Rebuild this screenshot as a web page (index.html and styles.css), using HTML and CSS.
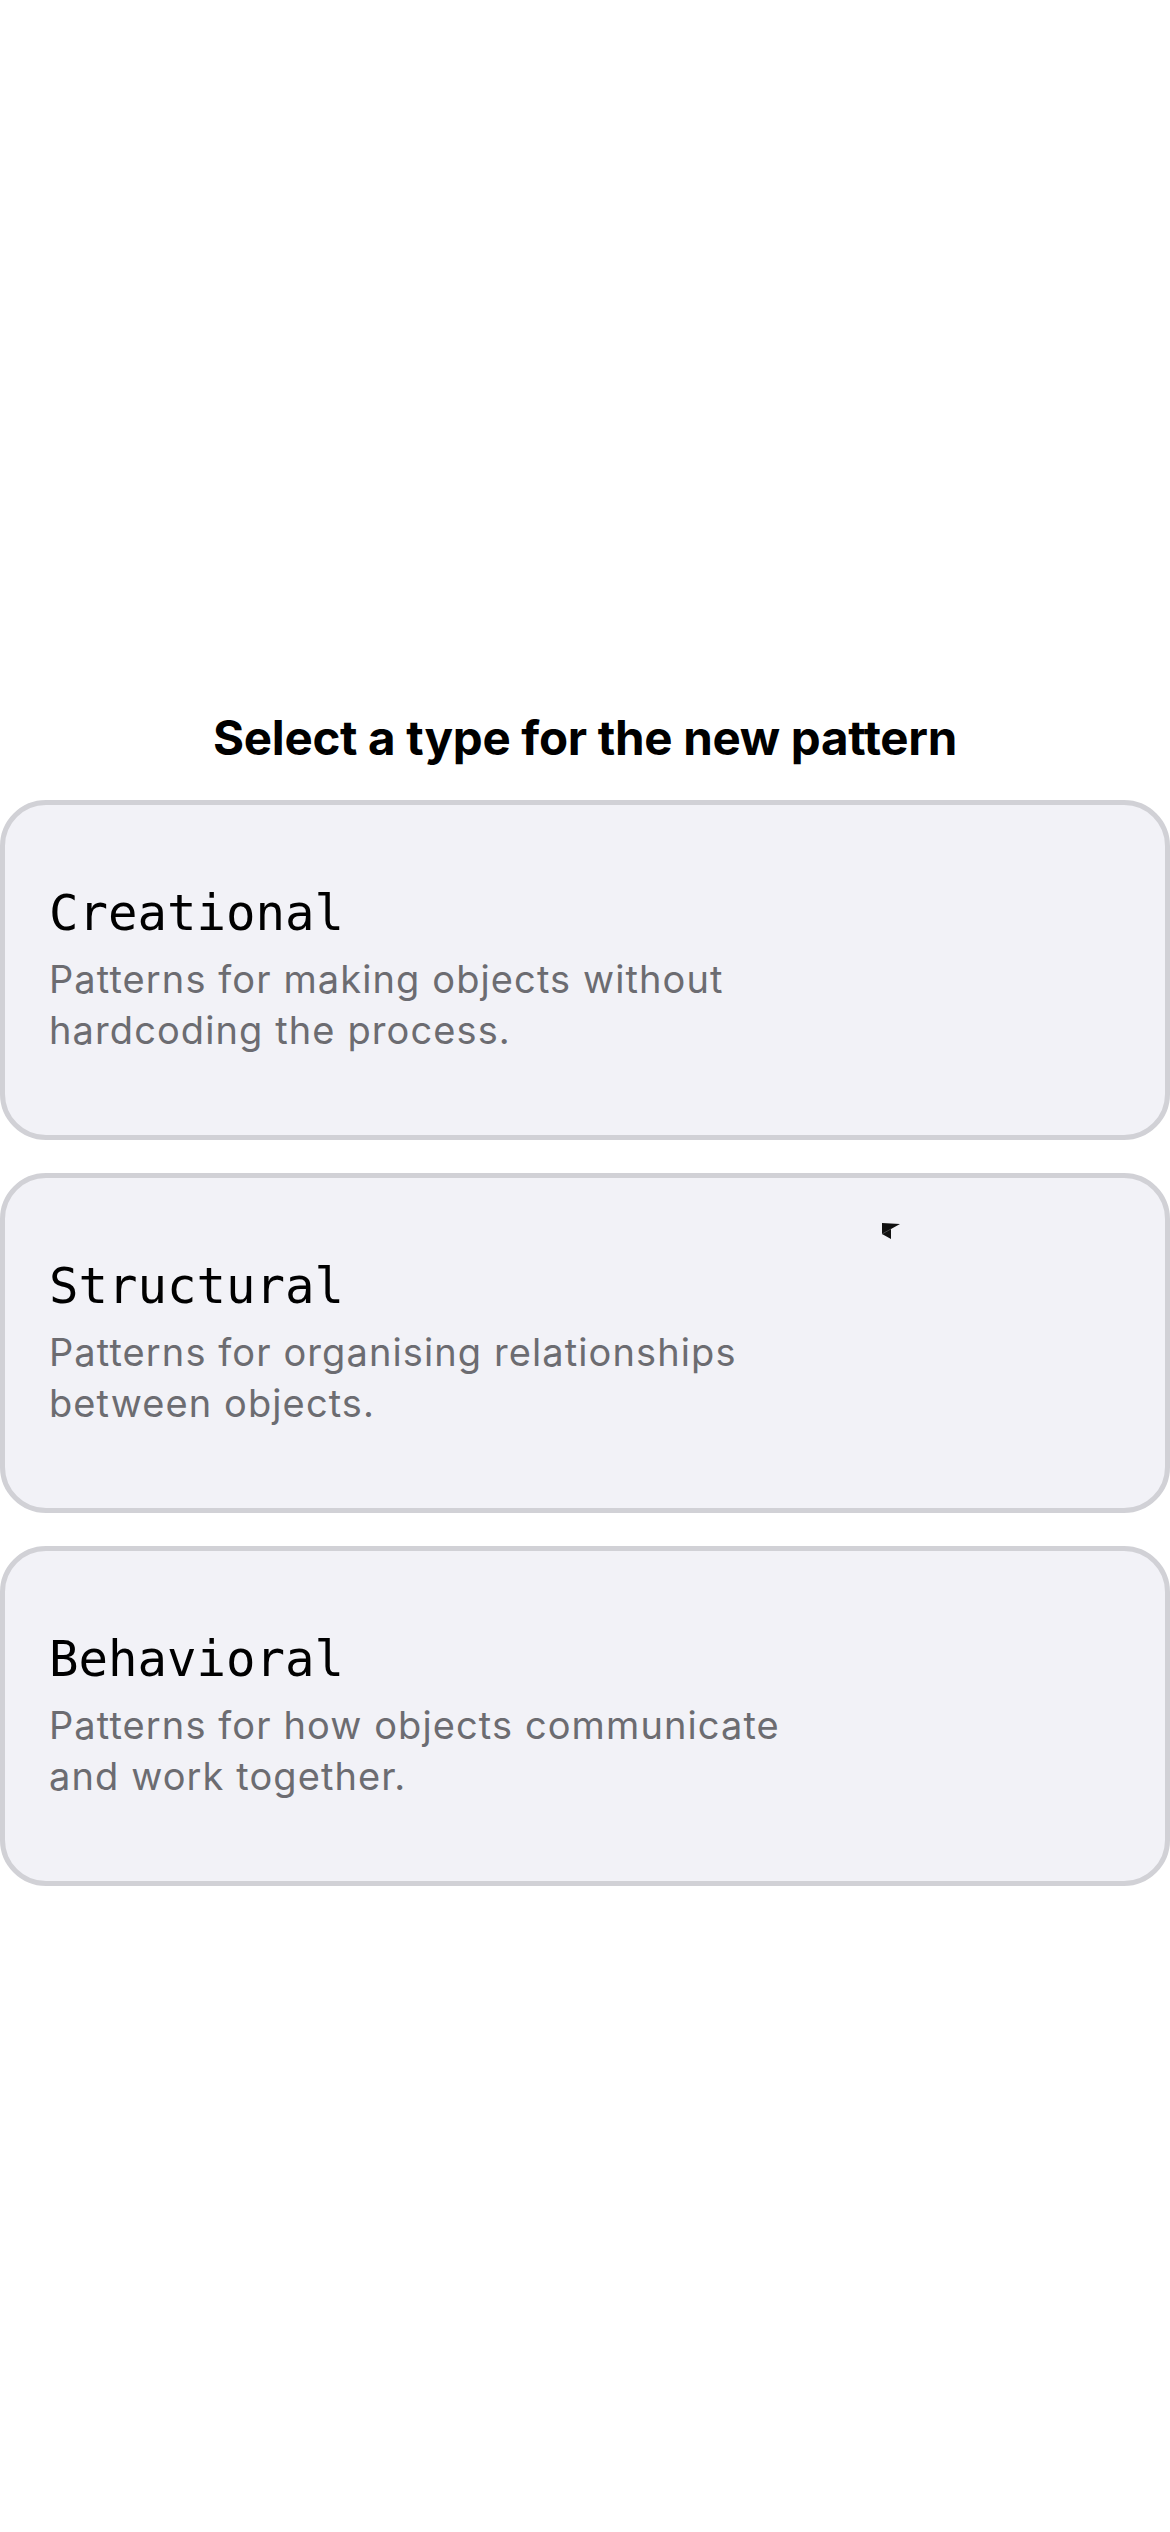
FILE: index.html
```html
<!DOCTYPE html>
<html lang="en">
<head>
<meta charset="utf-8">
<title>Select a type</title>
<link rel="stylesheet" href="styles.css">
</head>
<body>
<main class="sheet">
  <h1 class="heading">Select a type for the new pattern</h1>
  <ul class="types">
    <li class="type-card">
      <span class="type-name">Creational</span>
      <p class="type-desc">Patterns for making objects without hardcoding the process.</p>
    </li>
    <li class="type-card">
      <span class="type-name">Structural</span>
      <p class="type-desc">Patterns for organising relationships between objects.</p>
      <svg class="cursor" width="20" height="18" viewBox="0 0 20 18" aria-hidden="true">
        <polygon points="0,0 18,1 9,6 9,16 0,11" fill="#111"/>
        <line x1="0" y1="11" x2="9" y2="6" stroke="#555" stroke-width="0.8"/>
      </svg>
    </li>
    <li class="type-card">
      <span class="type-name">Behavioral</span>
      <p class="type-desc">Patterns for how objects communicate and work together.</p>
    </li>
  </ul>
</main>
</body>
</html>
```
FILE: styles.css
```css
html, body {
  margin: 0;
  padding: 0;
  background: #ffffff;
}
body {
  width: 1170px;
  height: 2532px;
  font-family: Inter, "Noto Sans", sans-serif;
}
.sheet {
  padding-top: 701px;
}
.heading {
  margin: 0;
  text-align: center;
  font-size: 47.5px;
  line-height: 74px;
  font-weight: 700;
  color: #000;
  letter-spacing: -0.3px;
}
.types {
  list-style: none;
  margin: 25px 0 0;
  padding: 0;
  display: flex;
  flex-direction: column;
  gap: 33px;
}
.type-card {
  position: relative;
  box-sizing: border-box;
  height: 340px;
  padding: 0 48px 0 44px;
  border: 5px solid #d1d1d6;
  border-radius: 46px;
  background: #f2f2f7;
  display: flex;
  flex-direction: column;
  justify-content: center;
}
.type-name {
  font-family: "DejaVu Sans Mono", "Liberation Mono", monospace;
  font-size: 49px;
  line-height: 60px;
  color: #000;
}
.type-desc {
  margin: 10px 0 0;
  max-width: 750px;
  font-size: 38px;
  line-height: 51px;
  color: #6c6c71;
  letter-spacing: 1.1px;
}
.cursor {
  position: absolute;
  left: 877px;
  top: 45px;
}
```
